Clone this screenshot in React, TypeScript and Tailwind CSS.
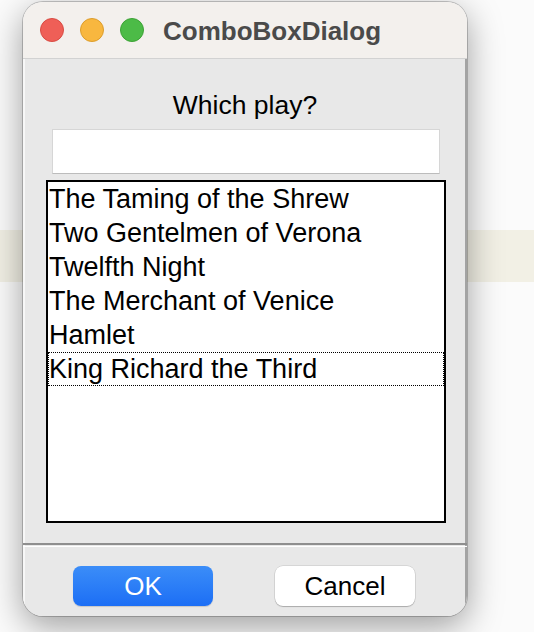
import React from "react";

const plays = [
  "The Taming of the Shrew",
  "Two Gentelmen of Verona",
  "Twelfth Night",
  "The Merchant of Venice",
  "Hamlet",
  "King Richard the Third",
];

export default function App() {
  return (
    <div
      className="relative w-[534px] h-[632px] overflow-hidden bg-[#fbfbfb]"
      style={{ fontFamily: '"Liberation Sans", Arial, sans-serif' }}
    >
      {/* desktop background band */}
      <div className="mt-[230px] h-[52px] bg-[#f2f0e5]" />

      {/* window */}
      <div className="absolute left-[23px] top-[2px] w-[444px] h-[614px] rounded-[20px] overflow-hidden flex flex-col shadow-[0_10px_35px_rgba(0,0,0,0.38),0_0_0_1px_rgba(0,0,0,0.2)]">
        {/* title bar */}
        <div className="h-[57px] shrink-0 bg-[#f3f0ed] border-b border-[#d2d2d2] flex items-center pl-[17px]">
          <div className="flex gap-[16px]">
            <span className="w-[24px] h-[24px] rounded-full bg-[#ef5f57] border border-[#d84c44]" />
            <span className="w-[24px] h-[24px] rounded-full bg-[#f8b73f] border border-[#dc9d2c]" />
            <span className="w-[24px] h-[24px] rounded-full bg-[#4cbb47] border border-[#3da236]" />
          </div>
          <span className="ml-[19px] text-[26px] font-bold text-[#4a4a4a] leading-none mt-[1px]">
            ComboBoxDialog
          </span>
        </div>

        {/* body */}
        <div className="flex-1 bg-[#e8e8e8] border-l-2 border-l-[#f7f7f7] border-r-2 border-r-[#a3a3a3] flex flex-col">
          <div className="mt-[31px] h-[30px] leading-[30px] text-[26.5px] text-black text-center">
            Which play?
          </div>
          <div className="mt-[9px] ml-[27px] w-[388px] h-[45px] bg-white border border-[#d6d6d6] border-b-[#bcbcbc]" />
          <div className="mt-[6px] ml-[21px] w-[400px] h-[343px] bg-white border-2 border-black">
            {plays.map((p, i) => (
              <div
                key={p}
                className={
                  i === plays.length - 1
                    ? "h-[34px] leading-[32px] text-[27px] text-black border border-dotted border-black whitespace-nowrap"
                    : "h-[34px] leading-[32px] text-[27px] text-black border border-transparent whitespace-nowrap"
                }
              >
                {p}
              </div>
            ))}
          </div>

          {/* separator */}
          <div className="mt-[20px] -ml-[2px] -mr-[2px] h-[2px] bg-[#8e8e8e]" />
          <div className="mt-[1px] -ml-[2px] -mr-[2px] h-[1px] bg-white" />

          {/* buttons */}
          <div className="mt-[19px] flex justify-center gap-[62px] pr-[2px]">
            <button className="w-[140px] h-[40px] rounded-[8px] bg-gradient-to-b from-[#3b8df8] to-[#1c6ef5] text-white text-[26px] leading-none shadow-[0_1px_1px_rgba(0,0,0,0.15)]">
              OK
            </button>
            <button className="w-[140px] h-[40px] rounded-[8px] bg-white text-black text-[26px] leading-none shadow-[0_0_0_0.5px_rgba(0,0,0,0.15),0_1px_1px_rgba(0,0,0,0.2)]">
              Cancel
            </button>
          </div>
        </div>
      </div>
    </div>
  );
}
